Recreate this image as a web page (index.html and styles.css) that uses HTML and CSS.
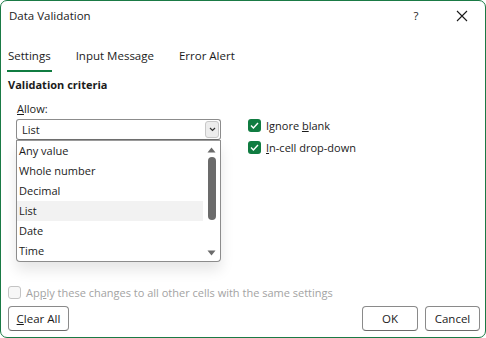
FILE: index.html
```html
<!DOCTYPE html>
<html>
<head>
<meta charset="utf-8">
<link rel="stylesheet" href="styles.css">
</head>
<body>
<div class="dialog">
  <div class="titlebar">
    <span class="title">Data Validation</span>
    <span class="help">?</span>
    <span class="close">
      <svg width="12" height="12" viewBox="0 0 12 12"><path d="M1 1 L11 11 M11 1 L1 11" stroke="#1a1a1a" stroke-width="1.1" fill="none"/></svg>
    </span>
  </div>
  <div class="tabs">
    <span class="tab active">Settings</span>
    <span class="tab">Input Message</span>
    <span class="tab">Error Alert</span>
  </div>
  <div class="content">
    <div class="section-title">Validation criteria</div>
    <div class="row">
      <div class="allow-col">
        <div class="label"><u>A</u>llow:</div>
        <div class="select">
          <span class="select-value">List</span>
          <span class="select-btn">
            <svg width="7" height="5" viewBox="0 0 7 5"><path d="M1 1 L3.5 3.5 L6 1" stroke="#333" stroke-width="1.2" fill="none"/></svg>
          </span>
        </div>
        <div class="listbox">
          <div class="items">
            <div class="item">Any value</div>
            <div class="item">Whole number</div>
            <div class="item">Decimal</div>
            <div class="item selected">List</div>
            <div class="item">Date</div>
            <div class="item">Time</div>
          </div>
          <div class="scrollbar">
            <svg class="arrow" width="9" height="6" viewBox="0 0 9 6"><path d="M0.5 5.5 L4.5 0.5 L8.5 5.5 Z" fill="#6b6b6b"/></svg>
            <div class="track"><div class="thumb"></div></div>
            <svg class="arrow" width="9" height="6" viewBox="0 0 9 6"><path d="M0.5 0.5 L4.5 5.5 L8.5 0.5 Z" fill="#6b6b6b"/></svg>
          </div>
        </div>
      </div>
      <div class="check-col">
        <label class="check"><span class="box on"><svg width="9" height="7" viewBox="0 0 9 7"><path d="M1 3.6 L3.4 6 L8 1" stroke="#fff" stroke-width="1.4" fill="none"/></svg></span><span>Ignore <u>b</u>lank</span></label>
        <label class="check"><span class="box on"><svg width="9" height="7" viewBox="0 0 9 7"><path d="M1 3.6 L3.4 6 L8 1" stroke="#fff" stroke-width="1.4" fill="none"/></svg></span><span><u>I</u>n-cell drop-down</span></label>
      </div>
    </div>
    <div class="apply">
      <span class="box off"></span>
      <span>Ap<u>p</u>ly these changes to all other cells with the same settings</span>
    </div>
  </div>
  <div class="footer">
    <button class="btn clear"><u>C</u>lear All</button>
    <span class="spacer"></span>
    <button class="btn ok">OK</button>
    <button class="btn cancel">Cancel</button>
  </div>
</div>
</body>
</html>
```
FILE: styles.css
```css
html, body {
  margin: 0;
  padding: 0;
  background: #ffffff;
}
.dialog {
  width: 486px;
  height: 338px;
  box-sizing: border-box;
  border: 1px solid #1a7a45;
  border-radius: 7px;
  background: #fff;
  display: flex;
  flex-direction: column;
  font-family: "Open Sans", "Noto Sans", sans-serif;
  font-size: 11px;
  color: #1b1b1b;
  overflow: hidden;
}
.titlebar {
  height: 29px;
  display: flex;
  align-items: center;
  padding-left: 8px;
  flex: none;
}
.title {
  font-size: 11.5px;
  flex: 1;
}
.help {
  width: 14px;
  text-align: center;
  margin-right: 33px;
  font-size: 11.5px;
}
.close {
  display: flex;
  align-items: center;
  width: 12px;
  margin-right: 17px;
}
.tabs {
  display: flex;
  gap: 23px;
  padding-left: 6px;
  margin-top: 18px;
  flex: none;
}
.tab {
  line-height: 16px;
  padding: 0 1px 6px 1px;
  border-bottom: 2px solid transparent;
  font-size: 11.5px;
}
.tab.active {
  border-bottom-color: #107c41;
}
.content {
  flex: 1;
  padding: 5px 0 0 7px;
  display: flex;
  flex-direction: column;
}
.section-title {
  font-weight: 700;
  line-height: 16px;
}
.row {
  display: flex;
}
.allow-col {
  margin-left: 8px;
  width: 205px;
  display: flex;
  flex-direction: column;
}
.label {
  line-height: 16px;
  margin-top: 8px;
  margin-left: 1px;
}
.select {
  margin-top: 2px;
  height: 21px;
  box-sizing: border-box;
  border: 1px solid #8c8c8c;
  border-bottom-color: #6e6e6e;
  border-radius: 3px;
  display: flex;
  align-items: center;
  padding: 0 1px 0 5px;
}
.select-value {
  flex: 1;
}
.select-btn {
  width: 14px;
  height: 17px;
  box-sizing: border-box;
  background: #ededed;
  border: 1px solid #c8c8c8;
  border-radius: 3px;
  display: flex;
  align-items: center;
  justify-content: center;
}
.listbox {
  height: 122px;
  box-sizing: border-box;
  border: 1px solid #8c8c8c;
  border-top: 1px solid #9a9a9a;
  border-radius: 0 0 4px 4px;
  display: flex;
  box-shadow: 0 8px 14px rgba(0, 0, 0, 0.10);
  background: #fff;
}
.items {
  flex: 1;
  display: flex;
  flex-direction: column;
}
.item {
  height: 20px;
  line-height: 20px;
  padding-left: 2px;
}
.item.selected {
  background: #f2f2f2;
}
.scrollbar {
  width: 17px;
  display: flex;
  flex-direction: column;
  align-items: center;
  padding: 6px 0 5px;
  box-sizing: border-box;
}
.scrollbar .arrow {
  flex: none;
}
.track {
  flex: 1;
  width: 8px;
  padding: 4px 0;
  box-sizing: border-box;
}
.thumb {
  width: 8px;
  height: 63px;
  border-radius: 4px;
  background: #6b6b6b;
}
.check-col {
  margin-left: 27px;
  margin-top: 26px;
  display: flex;
  flex-direction: column;
  gap: 9px;
}
.check {
  display: flex;
  align-items: center;
  gap: 5px;
  line-height: 13px;
}
.box {
  width: 13px;
  height: 13px;
  box-sizing: border-box;
  border-radius: 3px;
  display: inline-flex;
  align-items: center;
  justify-content: center;
  flex: none;
}
.box.on {
  background: #107c41;
}
.box.off {
  border: 1px solid #c4c4c4;
  background: #f7f7f7;
}
.apply {
  margin-top: 24px;
  display: flex;
  align-items: center;
  gap: 5px;
  color: #a3a3a3;
  line-height: 13px;
}
.footer {
  display: flex;
  padding: 0 5px 6px 7px;
  gap: 7px;
  flex: none;
}
.spacer {
  flex: 1;
}
.btn {
  height: 25px;
  box-sizing: border-box;
  border: 1px solid #8a8a8a;
  border-bottom-color: #6a6a6a;
  border-radius: 4px;
  background: #fff;
  font-family: "Open Sans", "Noto Sans", sans-serif;
  font-size: 11.5px;
  color: #1b1b1b;
  padding: 0;
}
.clear { width: 61px; }
.ok { width: 56px; }
.cancel { width: 55px; }
```
